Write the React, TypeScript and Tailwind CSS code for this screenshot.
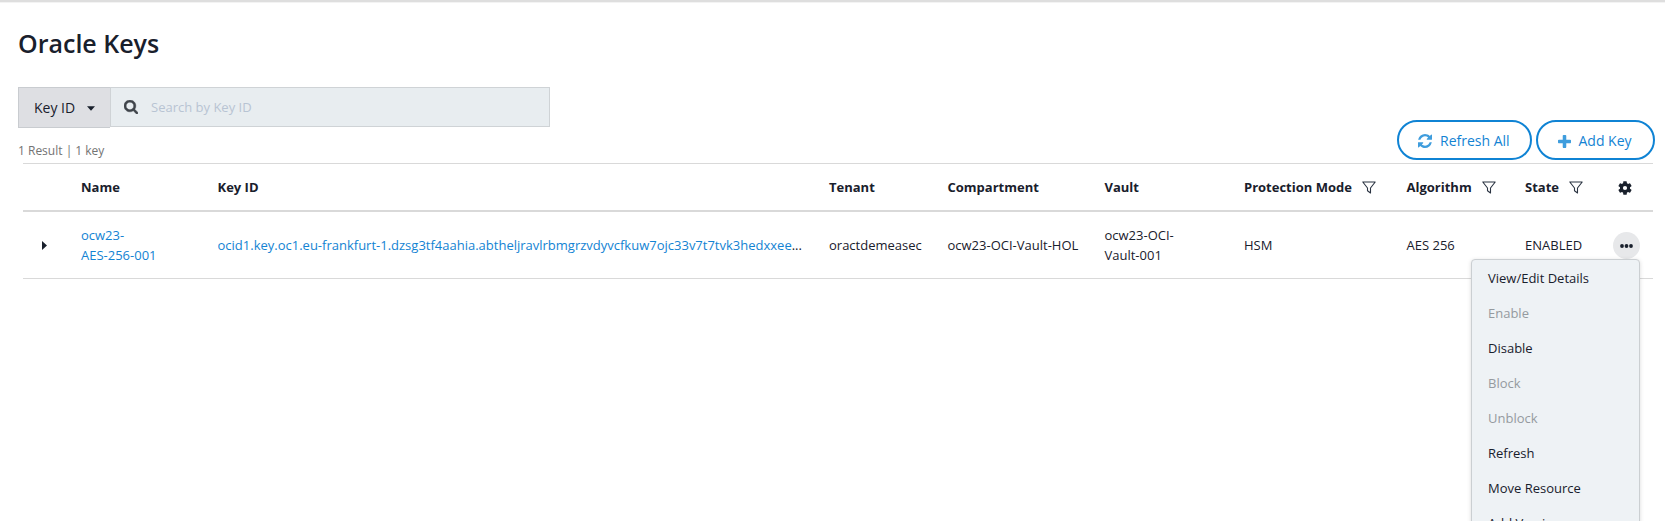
import React from "react";

const columns = "grid grid-cols-[58px_136.5px_611.5px_118.5px_157px_139.5px_162.5px_118.5px_128px] items-center";

const menuItems: { label: string; disabled?: boolean }[] = [
  { label: "View/Edit Details" },
  { label: "Enable", disabled: true },
  { label: "Disable" },
  { label: "Block", disabled: true },
  { label: "Unblock", disabled: true },
  { label: "Refresh" },
  { label: "Move Resource" },
  { label: "Add Version" },
];

function SearchIcon() {
  return (
    <svg className="h-[14px] w-[14px]" viewBox="64 128 1664 1664" fill="#3f444a" stroke="#3f444a" strokeWidth="50">
      <path d="M1216 832q0-185-131.5-316.5t-316.5-131.5-316.5 131.5-131.5 316.5 131.5 316.5 316.5 131.5 316.5-131.5 131.5-316.5zm512 832q0 52-38 90t-90 38q-54 0-90-38l-343-342q-179 124-399 124-143 0-273.5-55.5t-225-150-150-225-55.5-273.5 55.5-273.5 150-225 225-150 273.5-55.5 273.5 55.5 225 150 150 225 55.5 273.5q0 220-124 399l343 343q37 37 37 90z" />
    </svg>
  );
}

function RefreshIcon() {
  return (
    <svg className="h-[14px] w-[14px]" viewBox="0 0 1536 1536" fill="#3f9ddd">
      <path d="M1511 928q0 5-1 7-64 268-268 434.5t-478 166.5q-146 0-282.5-55t-243.5-157l-129 129q-19 19-45 19t-45-19-19-45v-448q0-26 19-45t45-19h448q26 0 45 19t19 45-19 45l-137 137q71 66 161 102t187 36q134 0 250-65t186-179q11-17 53-117 8-23 30-23h192q13 0 22.5 9.5t9.5 22.5zm25-800v448q0 26-19 45t-45 19h-448q-26 0-45-19t-19-45 19-45l138-138q-148-137-349-137-134 0-250 65t-186 179q-11 17-53 117-8 23-30 23h-199q-13 0-22.5-9.5t-9.5-22.5v-7q65-268 270-434.5t480-166.5q146 0 284 55.5t245 156.5l130-129q19-19 45-19t45 19 19 45z" />
    </svg>
  );
}

function PlusIcon() {
  return (
    <svg className="h-[13px] w-[13px]" viewBox="192 128 1408 1408" fill="#3f9ddd">
      <path d="M1600 736v192q0 40-28 68t-68 28h-416v416q0 40-28 68t-68 28h-192q-40 0-68-28t-28-68v-416h-416q-40 0-68-28t-28-68v-192q0-40 28-68t68-28h416v-416q0-40 28-68t68-28h192q40 0 68 28t28 68v416h416q40 0 68 28t28 68z" />
    </svg>
  );
}

function FilterIcon() {
  return (
    <svg className="h-[13px] w-[14px]" viewBox="0 0 14 13" fill="none" stroke="#2b3442" strokeWidth="1.1" strokeLinejoin="round">
      <path d="M.8 1h12.4L8.5 7v5L5.5 9.8V7z" />
    </svg>
  );
}

function GearIcon() {
  return (
    <svg className="h-[14px] w-[14px]" viewBox="2 2 20 20" fill="#19202c">
      <path d="M19.14 12.94c.04-.3.06-.61.06-.94 0-.32-.02-.64-.07-.94l2.03-1.58a.49.49 0 0 0 .12-.61l-1.92-3.32a.488.488 0 0 0-.59-.22l-2.39.96c-.5-.38-1.03-.7-1.62-.94l-.36-2.54a.484.484 0 0 0-.48-.41h-3.84c-.24 0-.43.17-.47.41l-.36 2.54c-.59.24-1.13.57-1.62.94l-2.39-.96c-.22-.08-.47 0-.59.22L2.74 8.87c-.12.21-.08.47.12.61l2.03 1.58c-.05.3-.09.63-.09.94s.02.64.07.94l-2.03 1.58a.49.49 0 0 0-.12.61l1.92 3.32c.12.22.37.29.59.22l2.39-.96c.5.38 1.03.7 1.62.94l.36 2.54c.05.24.24.41.48.41h3.84c.24 0 .44-.17.47-.41l.36-2.54c.59-.24 1.13-.56 1.62-.94l2.39.96c.22.08.47 0 .59-.22l1.92-3.32c.12-.22.07-.47-.12-.61l-2.01-1.58zM12 15a3 3 0 1 1 0-6 3 3 0 0 1 0 6z" />
    </svg>
  );
}

function HeaderCell({ label, filter }: { label: string; filter?: boolean }) {
  return (
    <div className="flex items-center gap-[10px]">
      <span>{label}</span>
      {filter && <FilterIcon />}
    </div>
  );
}

function PillButton({ icon, label, className }: { icon: React.ReactNode; label: string; className: string }) {
  return (
    <button className={`flex h-10 items-center gap-2 rounded-full border-2 border-[#0f83d4] bg-white pt-0.5 text-sm text-[#1383d3] ${className}`}>
      {icon}
      <span>{label}</span>
    </button>
  );
}

function ActionsMenu() {
  return (
    <div className="absolute top-[27px] right-0 w-[169px] rounded-t border border-[#cbcfd2] bg-[#eef2f5] pt-px pl-4 shadow-[0_1px_4px_rgba(0,0,0,0.15)]">
      {menuItems.map((item) => (
        <div
          key={item.label}
          className={`flex h-[35px] items-center text-[13px] ${item.disabled ? "text-[#959a9f]" : "text-[#19202c]"}`}
        >
          {item.label}
        </div>
      ))}
    </div>
  );
}

export default function App() {
  return (
    <main className="h-[521px] w-[1665px] overflow-hidden bg-white font-['Open_Sans',sans-serif] text-[13px] text-[#19202c]">
      <div className="h-0.5 bg-[#dedede]" />
      <div className="h-px bg-[#f3f3f3]" />
      <h1 className="mt-[22px] ml-[18px] text-[25px] leading-9 font-semibold">Oracle Keys</h1>

      <div className="mt-[26px] ml-[18px] flex items-start">
        <button className="flex h-[41px] w-[92px] items-center border border-r-0 border-[#c9ccd0] bg-[#dedfe3] pl-[15px] text-sm">
          Key ID
          <svg className="mt-px ml-3 h-[5px] w-2" viewBox="0 0 8 5" fill="#19202c">
            <path d="M0 .3h8L4 4.7z" />
          </svg>
        </button>
        <div className="flex h-10 w-[440px] items-center border border-[#cfd3d6] bg-[#e8edf0] pl-[13px]">
          <SearchIcon />
          <span className="mt-0.5 ml-[13px] text-[#b8c4d3]">Search by Key ID</span>
        </div>
      </div>

      <div className="flex h-[35px] items-end justify-between pr-[10px] pl-[18px]">
        <p className="mb-0.5 text-xs leading-5 text-[#737373]">1 Result | 1 key</p>
        <div className="mb-[3px] flex gap-1">
          <PillButton icon={<RefreshIcon />} label="Refresh All" className="w-[135px] pl-[19px]" />
          <PillButton icon={<PlusIcon />} label="Add Key" className="w-[119px] pl-[19.5px]" />
        </div>
      </div>

      <section className="ml-[23px] w-[1630px] border-t border-[#d9d9d9]">
        <div className={`${columns} h-[48px] border-b-2 border-[#d9d9d9] pt-px font-bold`}>
          <span />
          <HeaderCell label="Name" />
          <HeaderCell label="Key ID" />
          <HeaderCell label="Tenant" />
          <HeaderCell label="Compartment" />
          <HeaderCell label="Vault" />
          <HeaderCell label="Protection Mode" filter />
          <HeaderCell label="Algorithm" filter />
          <div className="flex items-center">
            <HeaderCell label="State" filter />
            <span className="ml-[35px]"><GearIcon /></span>
          </div>
        </div>
        <div className={`${columns} h-[67px] border-b border-[#d9d9d9] leading-5`}>
          <svg className="ml-[19px] h-[9px] w-[5px]" viewBox="0 0 5 9" fill="#19202c">
            <path d="M0 0l5 4.5L0 9z" />
          </svg>
          <a className="text-[#1383d3]">ocw23-<br />AES-256-001</a>
          <span className="w-[586px] truncate">
            <a className="text-[#1383d3]">ocid1.key.oc1.eu-frankfurt-1.dzsg3tf4aahia.abtheljravlrbmgrzvdyvcfkuw7ojc33v7t7tvk3hedxxee</a>...
          </span>
          <span>oractdemeasec</span>
          <span>ocw23-OCI-Vault-HOL</span>
          <span>ocw23-OCI-<br />Vault-001</span>
          <span>HSM</span>
          <span>AES 256</span>
          <div className="flex items-center">
            <span className="w-[88px]">ENABLED</span>
            <div className="relative flex h-[27px] w-[27px] items-center justify-center rounded-full bg-[#e7e8ea]">
              <svg className="mt-px h-1 w-[13px]" viewBox="0 0 13 4" fill="#19202c">
                <circle cx="2" cy="2" r="1.9" /><circle cx="6.5" cy="2" r="1.9" /><circle cx="11" cy="2" r="1.9" />
              </svg>
              <ActionsMenu />
            </div>
          </div>
        </div>
      </section>
    </main>
  );
}
